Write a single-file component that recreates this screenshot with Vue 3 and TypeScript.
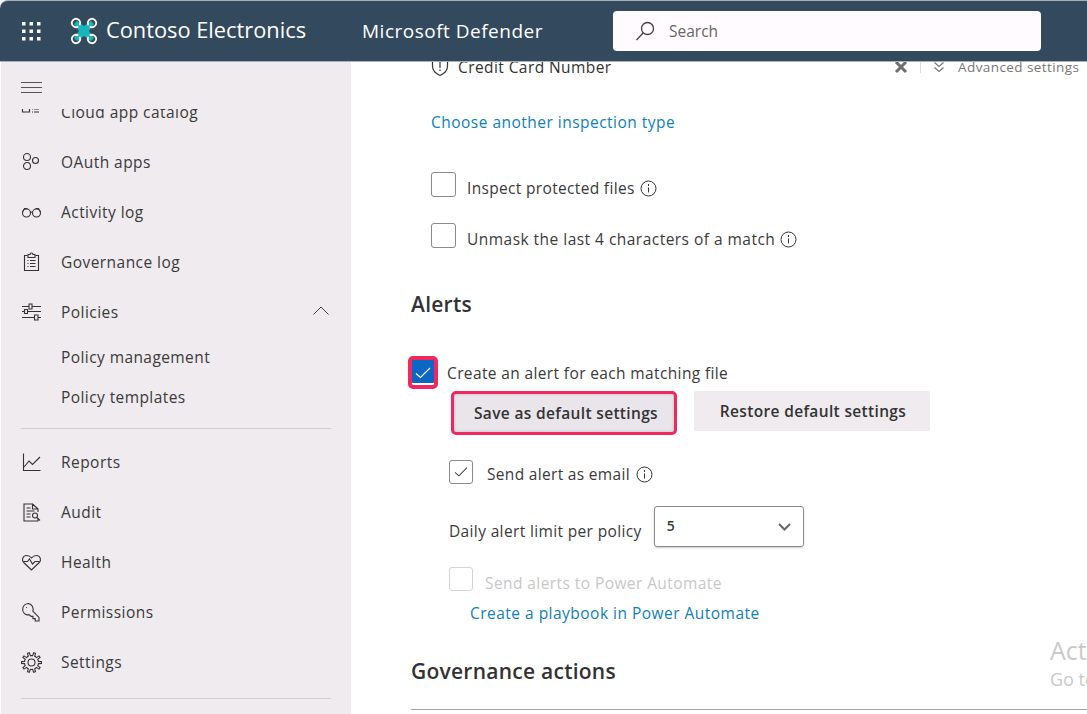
<script setup lang="ts">
interface NavItem {
  label: string
  paths: string[]
}

// Gear outline with square-ish teeth, centred in the 21px icon box
function gearPath(teeth: number, outer: number, inner: number): string {
  const pts: string[] = []
  const step = (Math.PI * 2) / teeth
  for (let i = 0; i < teeth; i++) {
    const a = i * step
    const corners: [number, number][] = [
      [a - step * 0.5, inner],
      [a - step * 0.25, inner],
      [a - step * 0.15, outer],
      [a + step * 0.15, outer],
      [a + step * 0.25, inner]
    ]
    for (const [ang, r] of corners) {
      pts.push(`${(10.5 + Math.cos(ang) * r).toFixed(1)} ${(10.5 + Math.sin(ang) * r).toFixed(1)}`)
    }
  }
  return `M${pts.join('L')}z`
}

const topItems: NavItem[] = [
  { label: 'Cloud app catalog', paths: ['M1.5 1v9h7V1', 'M11 4h1M13 4h5M11 7h1M13 7h5M11 10h1M13 10h5'] },
  {
    label: 'OAuth apps',
    paths: [
      'M6 1.5a3.5 3.5 0 1 0 0 7 3.5 3.5 0 0 0 0-7z',
      'M6 10.5a3.5 3.5 0 1 0 0 7 3.5 3.5 0 0 0 0-7z',
      'M14.5 5.5a3 3 0 1 0 0 6 3 3 0 0 0 0-6z'
    ]
  },
  {
    label: 'Activity log',
    paths: [
      'M5.5 7a4 4 0 1 0 0 8 4 4 0 0 0 0-8z',
      'M15.5 7a4 4 0 1 0 0 8 4 4 0 0 0 0-8z',
      'M9.5 10.5c.7-.6 1.4-.6 2 0',
      'M1.5 10l2-3.5h3M19.5 10l-2-3.5h-3'
    ]
  },
  {
    label: 'Governance log',
    paths: [
      'M6.5 3.5h-3v15h14v-15h-3',
      'M7 5.5v-3h2a1.5 1.5 0 0 1 3 0h2v3z',
      'M6.5 8.5h1M9 8.5h5.5M6.5 11.5h1M9 11.5h5.5M6.5 14.5h1M9 14.5h5.5'
    ]
  }
]

const bottomItems: NavItem[] = [
  { label: 'Reports', paths: ['M2.5 1.500v17h17', 'M3 15l5-6 3.500 3.500 7.500-7.500'] },
  {
    label: 'Audit',
    paths: [
      'M12 2H3v17h14v-2',
      'M11.500 2v5h5.500v3M11.500 2l5.500 5',
      'M5.500 6h4M5.500 9h8M5.500 12h4M5.500 15h4',
      'M14 11a2.500 2.500 0 1 0 0 5 2.500 2.500 0 0 0 0-5zM16 15.500l3 3'
    ]
  },
  {
    label: 'Health',
    paths: [
      'M10.500 18L2.700 10.500C.5 8 1.500 4 5 3.500c2.200-.3 4 .7 5.500 2.500C12 4.200 13.800 3.200 16 3.500c3.500.5 4.500 4.500 2.300 7z',
      'M2.500 9.500h4l2-2.500 3 5 2.500-2.500h4.500'
    ]
  },
  {
    label: 'Permissions',
    paths: [
      'M7.500 1.500a5.800 5.800 0 0 0-1.500 11.400h2.500l1.500 1.500h2v2.200h2.200v2.400h3.800v-3.600l-6.200-6.300A5.800 5.800 0 0 0 7.500 1.500z',
      'M5 5.500h.8'
    ]
  },
  {
    label: 'Settings',
    paths: ['M10.500 7a3.500 3.500 0 1 0 0 7 3.500 3.500 0 0 0 0-7z', gearPath(10, 10, 7)]
  }
]

const policyIcon = [
  'M1 4.500h7M11 4.500h9M8 2h3v5H8zM1 9.500h2.500M6.500 9.500H20M3.500 7.500h3v4h-3z',
  'M1 15.500h12.500M17 15.500h3M13.500 13h3.500v5h-3.500z'
]
</script>

<template>
  <div class="page">
    <header class="topbar">
      <svg class="waffle" width="20" height="20" viewBox="0 0 20 20" fill="#fff">
        <rect v-for="p in 9" :key="p" :x="1 + ((p - 1) % 3) * 7.5" :y="1 + Math.floor((p - 1) / 3) * 7.5" width="3.5" height="3.5" />
      </svg>
      <svg class="logo" width="28" height="28" viewBox="0 0 28 28">
        <path d="M7 4l7 5 7-5 3 3-5 7 5 7-3 3-7-5-7 5-3-3 5-7-5-7z" fill="#18b5bd" />
        <g fill="none" stroke="#fff" stroke-width="1.8">
          <path d="M9.500 8.300A4.200 4.200 0 1 0 8.300 9.500" />
          <path d="M18.500 8.300A4.200 4.200 0 1 1 19.700 9.500" />
          <path d="M9.500 19.700A4.200 4.200 0 1 1 8.300 18.500" />
          <path d="M18.500 19.700A4.200 4.200 0 1 0 19.700 18.500" />
        </g>
      </svg>
      <span class="brand">Contoso Electronics</span>
      <span class="product">Microsoft Defender</span>
      <div class="search">
        <svg width="22" height="22" viewBox="0 0 22 22" fill="none" stroke="#444" stroke-width="1.3">
          <circle cx="13.500" cy="8.500" r="6" />
          <path d="M9.300 12.800L2.500 20" />
        </svg>
        <span>Search</span>
      </div>
    </header>

    <div class="body">
      <aside class="sidebar">
        <svg class="burger" width="21" height="14" viewBox="0 0 21 14" stroke="#555" stroke-width="1">
          <path d="M0 1.500h21M0 6.500h21M0 11.500h21" />
        </svg>
        <nav class="nav">
          <div class="nav-inner">
            <div v-for="item in topItems" :key="item.label" class="nav-row">
              <svg width="21" height="21" viewBox="0 0 21 21" fill="none" stroke="#333" stroke-width="1.1">
                <path v-for="d in item.paths" :key="d" :d="d" />
              </svg>
              <span>{{ item.label }}</span>
            </div>
            <div class="nav-row">
              <svg width="21" height="21" viewBox="0 0 21 21" fill="none" stroke="#333" stroke-width="1.1">
                <path v-for="d in policyIcon" :key="d" :d="d" />
              </svg>
              <span>Policies</span>
              <svg class="caret" width="16" height="9" viewBox="0 0 16 9" fill="none" stroke="#444" stroke-width="1">
                <path d="M.5 8.500l7.500-7.500 7.500 7.500" />
              </svg>
            </div>
            <div class="sub-row">Policy management</div>
            <div class="sub-row">Policy templates</div>
            <hr class="rule" />
            <div v-for="item in bottomItems" :key="item.label" class="nav-row">
              <svg width="21" height="21" viewBox="0 0 21 21" fill="none" stroke="#333" stroke-width="1.1">
                <path v-for="d in item.paths" :key="d" :d="d" />
              </svg>
              <span>{{ item.label }}</span>
            </div>
            <hr class="rule rule-last" />
          </div>
        </nav>
      </aside>

      <main class="content">
        <div class="inspect">
          <svg width="18" height="20" viewBox="0 0 18 20" fill="none" stroke="#333" stroke-width="1.2">
            <path d="M9 1.500l7.500 1.500v6c0 4.500-3 7.500-7.500 9.500C4.500 16.500 1.500 13.500 1.500 9V3z" />
            <path d="M9 5v6M9 12.500v1.500" />
          </svg>
          <span class="inspect-name">Credit Card Number</span>
          <svg class="remove" width="14" height="14" viewBox="0 0 14 14" stroke="#6e6e6e" stroke-width="3">
            <path d="M2 2l10 10M12 2L2 12" />
          </svg>
          <i class="bar"></i>
          <svg class="adv" width="12" height="12" viewBox="0 0 12 12" fill="none" stroke="#777" stroke-width="1.2">
            <path d="M1.500 1.500L6 5.500l4.500-4M1.500 6.500L6 10.500l4.500-4" />
          </svg>
          <span class="adv-label">Advanced settings</span>
        </div>

        <a class="link choose">Choose another inspection type</a>

        <label class="check-row first-check">
          <i class="box"></i>
          <span class="check-text">Inspect protected files</span>
          <svg class="info" width="17" height="17" viewBox="0 0 17 17" fill="none" stroke="#333">
            <circle cx="8.500" cy="8.500" r="7.500" />
            <path d="M8.500 7.500v5M8.500 4v2" />
          </svg>
        </label>
        <label class="check-row second-check">
          <i class="box"></i>
          <span class="check-text">Unmask the last 4 characters of a match</span>
          <svg class="info" width="17" height="17" viewBox="0 0 17 17" fill="none" stroke="#333">
            <circle cx="8.500" cy="8.500" r="7.500" />
            <path d="M8.500 7.500v5M8.500 4v2" />
          </svg>
        </label>

        <h2 class="heading alerts">Alerts</h2>

        <div class="alert-row">
          <span class="box-on">
            <svg width="18" height="14" viewBox="0 0 18 14" fill="none" stroke="#fff" stroke-width="1.2">
              <path d="M2 7.500l4.500 4L16 2" />
            </svg>
          </span>
          <span>Create an alert for each matching file</span>
        </div>

        <div class="buttons">
          <button class="btn btn-save">Save as default settings</button>
          <button class="btn btn-restore">Restore default settings</button>
        </div>

        <label class="check-row email">
          <i class="box small">
            <svg width="16" height="12" viewBox="0 0 18 14" fill="none" stroke="#444" stroke-width="1.2">
              <path d="M2 7.500l4.500 4L16 2" />
            </svg>
          </i>
          <span class="email-text">Send alert as email</span>
          <svg class="info" width="17" height="17" viewBox="0 0 17 17" fill="none" stroke="#333">
            <circle cx="8.500" cy="8.500" r="7.500" />
            <path d="M8.500 7.500v5M8.500 4v2" />
          </svg>
        </label>

        <div class="limit">
          <span class="limit-text">Daily alert limit per policy</span>
          <div class="select">
            <b>5</b>
            <svg width="13" height="8" viewBox="0 0 13 8" fill="none" stroke="#666" stroke-width="2">
              <path d="M1 1l5.500 5.500L12 1" />
            </svg>
          </div>
        </div>

        <label class="check-row disabled">
          <i class="box small"></i>
          <span class="disabled-text">Send alerts to Power Automate</span>
        </label>
        <a class="link playbook">Create a playbook in Power Automate</a>

        <h2 class="heading governance">Governance actions</h2>
        <hr class="end-rule" />

        <div class="watermark">
          <p class="wm-big">Activate Windows</p>
          <p class="wm-small">Go to Settings to activate Windows.</p>
        </div>
      </main>
    </div>
  </div>
</template>

<style scoped>
.page {
  width: 1087px;
  height: 714px;
  overflow: hidden;
  display: flex;
  flex-direction: column;
  background: #fff;
  font-family: "Open Sans", "Noto Sans", sans-serif;
  color: #3a3a3a;
}

.topbar {
  flex: none;
  position: relative;
  z-index: 1;
  box-sizing: border-box;
  height: 62px;
  display: flex;
  align-items: center;
  background: #33495d;
  border-top: 1px solid #a9b0b6;
  border-bottom: 1px solid #a9b0b6;
  border-top-left-radius: 8px;
  padding-left: 21px;
  color: #fff;
}

.logo {
  margin-left: 29px;
}

.brand {
  margin-left: 8px;
  margin-top: -3px;
  width: 256px;
  font-size: 21.8px;
  font-weight: 500;
  white-space: nowrap;
}

.product {
  width: 251px;
  font-size: 19px;
  letter-spacing: 0.5px;
  white-space: nowrap;
}

.search {
  box-sizing: border-box;
  width: 428px;
  height: 40px;
  display: flex;
  align-items: center;
  gap: 13px;
  padding-left: 21px;
  background: #fffbff;
  border-radius: 4px;
  color: #666;
  font-size: 15.5px;
}

.body {
  flex: 1;
  min-height: 0;
  display: flex;
}

.sidebar {
  flex: none;
  width: 350px;
  margin-left: 1px;
  display: flex;
  flex-direction: column;
  background: #efebef;
}

.burger {
  flex: none;
  margin: 19px 0 0 20px;
}

.nav {
  flex: 1;
  min-height: 0;
  margin-top: 14px;
  overflow: hidden;
}

.nav-inner {
  margin-top: -22px;
}

.nav-row {
  height: 50px;
  display: flex;
  align-items: center;
  gap: 19px;
  padding-left: 20px;
  font-size: 15.5px;
  letter-spacing: 0.45px;
}

.caret {
  margin-left: 175px;
  margin-top: -4px;
}

.sub-row {
  height: 40px;
  display: flex;
  align-items: center;
  padding-left: 60px;
  font-size: 15.5px;
  letter-spacing: 0.42px;
}

.rule {
  margin: 11px 20px 8px;
  border: 0;
  border-top: 1px solid #d2ced3;
}

.rule-last {
  margin-top: 11px;
}

.content {
  flex: 1;
  min-width: 0;
  position: relative;
  overflow: hidden;
  padding-left: 60px;
  font-size: 15.5px;
  letter-spacing: 0.42px;
}

.inspect {
  height: 10px;
  display: flex;
  align-items: center;
  margin-left: 20px;
  color: #333;
  white-space: nowrap;
}

.inspect-name {
  margin-left: 9px;
  width: 436px;
  flex: none;
}

.remove {
  flex: none;
}

.bar {
  flex: none;
  width: 1px;
  height: 12px;
  margin: 0 12px;
  background: #ddd;
}

.adv {
  flex: none;
}

.adv-label {
  margin-left: 13px;
  font-size: 13.5px;
  color: #777;
}

.link {
  display: block;
  color: #0f7fb8;
  letter-spacing: 0.48px;
  white-space: nowrap;
}

.choose {
  margin: 39px 0 0 20px;
  line-height: 22px;
}

.check-row {
  display: flex;
  align-items: flex-start;
  white-space: nowrap;
}

.check-text {
  margin-top: 6px;
  line-height: 21px;
}

.first-check {
  margin: 39px 0 0 20px;
  gap: 11px;
  letter-spacing: 0.33px;
}

.second-check {
  margin: 24px 0 0 20px;
  gap: 11px;
  letter-spacing: 0.47px;
}

.info {
  flex: none;
  margin: 8px 0 0 -6px;
}

.box {
  flex: none;
  box-sizing: border-box;
  width: 25px;
  height: 25px;
  display: flex;
  align-items: center;
  justify-content: center;
  border: 1px solid #8a8a8a;
  border-radius: 3px;
  background: #fff;
}

.box.small {
  width: 24px;
  height: 24px;
}

.heading {
  margin: 0;
  font-size: 21px;
  font-weight: 600;
  letter-spacing: 0.25px;
  color: #333;
  line-height: 28px;
}

.alerts {
  margin-top: 40px;
}

.alert-row {
  display: flex;
  align-items: center;
  gap: 9px;
  margin: 38px 0 0 -3px;
  letter-spacing: 0.37px;
  white-space: nowrap;
}

.box-on {
  flex: none;
  box-sizing: border-box;
  width: 30px;
  height: 33px;
  display: flex;
  align-items: center;
  justify-content: center;
  background: #0a68c4;
  border: 4px solid #f0285f;
  border-radius: 5px;
  box-shadow: inset 0 -2px 0 #fff;
}

.buttons {
  display: flex;
  align-items: flex-start;
  gap: 17px;
  margin: 2px 0 0 40px;
}

.btn {
  box-sizing: border-box;
  border: 0;
  padding: 0;
  font: 600 15.5px "Open Sans", "Noto Sans", sans-serif;
  letter-spacing: 0.34px;
  color: #333;
  white-space: nowrap;
}

.btn-save {
  width: 226px;
  height: 44px;
  padding-left: 4px;
  background: #e9e5ea;
  border: 3px solid #f0285f;
  border-radius: 5px;
  box-shadow: inset 0 0 3px rgba(0, 0, 0, 0.2);
}

.btn-restore {
  width: 236px;
  height: 40px;
  padding-left: 2px;
  background: #efebef;
  border-radius: 2px;
}

.email {
  margin: 25px 0 0 38px;
  gap: 14px;
}

.email-text {
  margin-top: 4px;
  line-height: 21px;
  letter-spacing: 0.32px;
}

.email .info {
  margin: 6px 0 0 -8px;
}

.limit {
  display: flex;
  align-items: center;
  gap: 12px;
  margin: 21px 0 0 38px;
  white-space: nowrap;
}

.limit-text {
  margin-top: 8px;
  letter-spacing: 0.36px;
}

.select {
  box-sizing: border-box;
  width: 150px;
  height: 41px;
  display: flex;
  align-items: center;
  justify-content: space-between;
  padding: 0 12px;
  border: 1px solid #8a8a8a;
  border-radius: 3px;
  box-shadow: 0 1px 2px rgba(0, 0, 0, 0.2);
}

.select b {
  margin-top: -3px;
  font-size: 14px;
  font-weight: 600;
}

.disabled {
  margin: 20px 0 0 38px;
  gap: 12px;
  color: #c8c8c8;
}

.disabled .box {
  border-color: #d4d4d4;
}

.disabled-text {
  margin-top: 6px;
  line-height: 21px;
}

.playbook {
  margin: 8px 0 0 59px;
  line-height: 22px;
}

.governance {
  margin-top: 33px;
}

.end-rule {
  margin: 24px 0 0;
  border: 0;
  border-top: 1px solid #a3a39b;
}

.watermark {
  position: absolute;
  left: 699px;
  top: 571px;
  white-space: nowrap;
  color: #c9c9c9;
  letter-spacing: 0;
}

.watermark p {
  margin: 0;
}

.wm-big {
  font-size: 25px;
  line-height: 34px;
}

.wm-small {
  font-size: 18px;
  line-height: 24px;
}
</style>
